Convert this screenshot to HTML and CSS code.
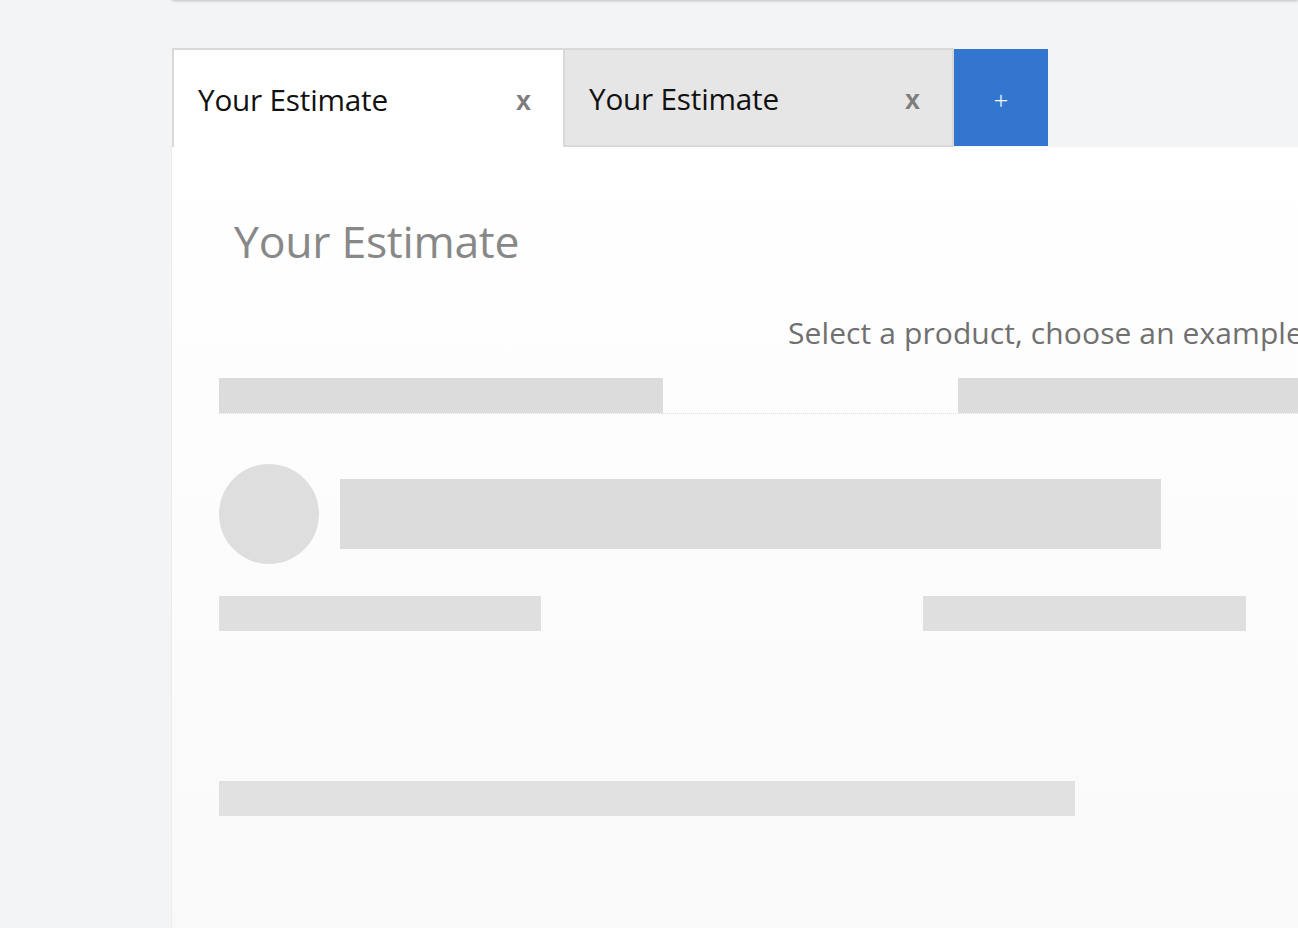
FILE: index.html
```html
<!DOCTYPE html>
<html>
<head>
<meta charset="utf-8">
<link rel="stylesheet" href="styles.css">
</head>
<body>
<div class="topbar"></div>
<div class="tabs">
  <div class="tab tab-active"><span class="tab-label">Your Estimate</span><span class="tab-close">x</span></div>
  <div class="tab tab-inactive"><span class="tab-label">Your Estimate</span><span class="tab-close">x</span></div>
  <div class="tab-add">+</div>
</div>
<div class="panel">
  <h1 class="title">Your Estimate</h1>
  <p class="hint">Select a product, choose an example</p>
  <div class="sk-row sk-row-head">
    <div class="sk sk-a"></div>
    <div class="sk sk-b"></div>
  </div>
  <div class="sk-row sk-row-item">
    <div class="sk-circle"></div>
    <div class="sk sk-c"></div>
  </div>
  <div class="sk-row sk-row-pair">
    <div class="sk sk-d"></div>
    <div class="sk sk-e"></div>
  </div>
  <div class="sk-row sk-row-foot">
    <div class="sk sk-f"></div>
  </div>
</div>
</body>
</html>
```

FILE: styles.css
```css
html, body {
  margin: 0;
  padding: 0;
}
body {
  background: #f3f4f6;
  font-family: "Open Sans", "Noto Sans", sans-serif;
  overflow: hidden;
  width: 1298px;
  height: 928px;
}
.topbar {
  margin-left: 172px;
  margin-top: -10px;
  height: 10px;
  width: 1126px;
  background: #f3f4f6;
  box-shadow: 0 1px 3px rgba(0, 0, 0, 0.22);
}
.tabs {
  display: flex;
  margin-top: 48px;
  margin-left: 172px;
  height: 99px;
}
.tab {
  box-sizing: border-box;
  width: 391px;
  height: 99px;
  display: flex;
  align-items: center;
  justify-content: space-between;
  padding: 0 32px 0 24px;
  border: 2px solid #d9d9d9;
}
.tab-active {
  background: #ffffff;
  border-bottom: none;
  border-right: none;
}
.tab-inactive {
  background: #e6e6e6;
}
.tab-label {
  font-size: 29.7px;
  color: #111;
  letter-spacing: -0.2px;
  margin-top: 2px;
}
.tab-close {
  font-size: 27px;
  font-weight: 600;
  color: #7d7d7d;
  font-family: "Liberation Sans", sans-serif;
  margin-top: 6px;
}
.tab-add {
  box-sizing: border-box;
  width: 94px;
  height: 97px;
  margin-top: 1px;
  padding-top: 4px;
  background: #3276d0;
  color: #fff;
  font-size: 26px;
  font-weight: 300;
  display: flex;
  align-items: center;
  justify-content: center;
}
.panel {
  width: 1127px;
  height: 781px;
  margin-left: 171px;
  background: linear-gradient(#ffffff, #f9f9f9);
  border-left: 1px solid #ececec;
  padding-left: 47px;
  box-sizing: border-box;
  overflow: hidden;
}
.title {
  margin: 0;
  padding: 62px 0 0 15px;
  font-size: 44.6px;
  font-weight: 400;
  color: #888;
  line-height: 64px;
  letter-spacing: -0.3px;
}
.hint {
  margin: 0;
  padding: 37px 0 0 569px;
  font-size: 30px;
  color: #707070;
  line-height: 46px;
  white-space: nowrap;
  letter-spacing: 0.1px;
}
.sk {
  background: #dcdcdc;
  flex-shrink: 0;
}
.sk-row {
  display: flex;
  align-items: center;
}
.sk-row-head {
  margin-top: 22px;
  height: 35px;
  border-bottom: 1px dotted #dedede;
  align-items: stretch;
}
.sk-a { width: 444px; }
.sk-b { width: 600px; margin-left: 295px; }
.sk-row-item {
  margin-top: 50px;
  gap: 21px;
}
.sk-circle {
  flex-shrink: 0;
  width: 100px;
  height: 100px;
  border-radius: 50%;
  background: #dedede;
}
.sk-c { width: 821px; height: 70px; }
.sk-row-pair {
  margin-top: 32px;
  height: 35px;
}
.sk-d { width: 322px; height: 35px; background: #dfdfdf; }
.sk-e { width: 323px; height: 35px; margin-left: 382px; background: #dfdfdf; }
.sk-row-foot {
  margin-top: 150px;
}
.sk-f { width: 856px; height: 35px; background: #e1e1e1; }
```
